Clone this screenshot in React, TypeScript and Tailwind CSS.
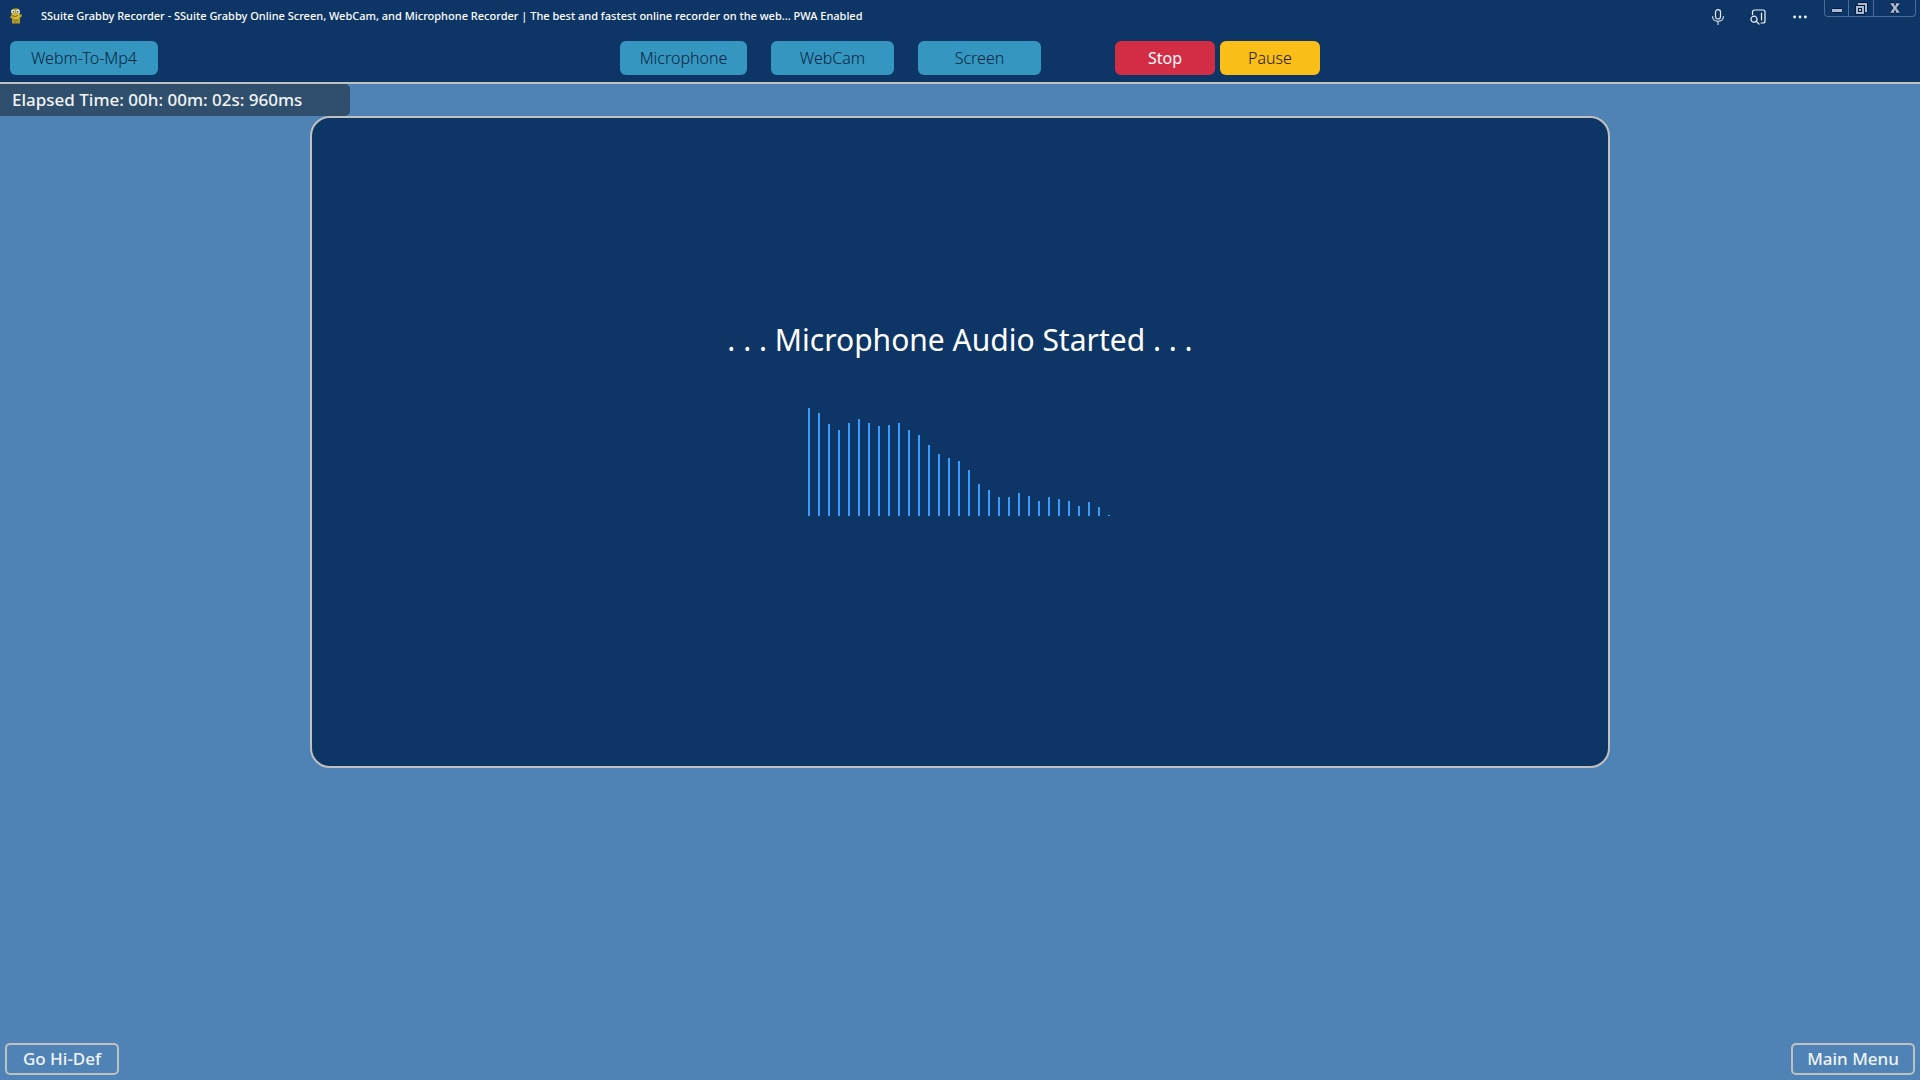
import type { ButtonHTMLAttributes } from 'react';
import clsx from 'clsx';

// Bar heights of the microphone level graph, in canvas pixels
const LEVELS = [
  108, 103, 92, 86, 93, 97, 93, 90, 91, 93, 86, 81, 71, 62, 58, 55, 46, 32, 26, 19, 19, 23, 20, 15, 19, 17, 15, 10, 14,
  9, 1,
];

function ToolButton({ className, ...props }: ButtonHTMLAttributes<HTMLButtonElement>) {
  return (
    <button
      type="button"
      className={clsx('flex h-[34px] items-center justify-center rounded-md text-base', className)}
      {...props}
    />
  );
}

function OutlineButton({ className, ...props }: ButtonHTMLAttributes<HTMLButtonElement>) {
  return (
    <button
      type="button"
      className={clsx(
        'flex h-8 items-center justify-center rounded-[5px] border-2 border-[#c0c0c0] text-[17px] font-medium text-[#f0f4f8]',
        className
      )}
      {...props}
    />
  );
}

function AppLogo() {
  return (
    <svg className="h-4 w-3" viewBox="0 0 12 16" aria-hidden="true">
      <path d="M1.500 2Q5-1 9 1l1 4v2l1.500-1 .5 2-2 2v5.500H2V11L0 9l1.500-2z" fill="#b59b27" />
      <path d="M2 6h7l1 3-3 2-4-1z" fill="#d7be3c" />
      <path d="M2 7.500q3 2 6 0" stroke="#665819" strokeWidth=".9" fill="none" />
      <path d="M3.500 12.500h4M5.500 15.500v-1.500" stroke="#8a7620" strokeWidth="1" />
      <circle cx="3" cy="3.500" r="2" fill="#e5e7e2" />
      <circle cx="8" cy="3.500" r="2" fill="#e5e7e2" />
      <circle cx="3.300" cy="3.700" r=".8" fill="#24345a" />
      <circle cx="7.700" cy="3.700" r=".8" fill="#24345a" />
    </svg>
  );
}

function MicIcon() {
  return (
    <svg className="h-4 w-3" viewBox="0 0 12 16" fill="none" stroke="#e6ecf3" strokeLinecap="round" aria-hidden="true">
      <rect x="3.5" y=".6" width="5" height="9.4" rx="2.5" strokeWidth="1.2" />
      <path d="M.7 7.5v.8a5.3 4 0 0 0 10.6 0v-.8M6 12.5v3" strokeWidth="1.1" />
    </svg>
  );
}

function TabSearchIcon() {
  return (
    <svg className="h-4 w-4" viewBox="0 0 16 16" fill="none" stroke="#f1f5f9" strokeLinecap="round" aria-hidden="true">
      <path d="M2.500 5.500V3a2 2 0 0 1 2-2H13a2 2 0 0 1 2 2v9a2 2 0 0 1-2 2h-2" strokeWidth="1.2" />
      <circle cx="4" cy="10.200" r="3" strokeWidth="1.2" />
      <path d="m6.300 12.400 2.700 2.600M11.500 4v7" strokeWidth="1.2" />
    </svg>
  );
}

function MoreIcon() {
  return (
    <svg className="h-4 w-4" viewBox="0 0 16 16" fill="#f1f5f9" aria-hidden="true">
      <circle cx="2.6" cy="8" r="1.4" />
      <circle cx="8" cy="8" r="1.4" />
      <circle cx="13.4" cy="8" r="1.4" />
    </svg>
  );
}

function MinimizeIcon() {
  return (
    <svg className="h-4 w-4" viewBox="0 0 16 16" aria-hidden="true">
      <rect x="2.500" y="8.500" width="11" height="4" rx="1" fill="#a9b9d2" stroke="#071d3c" />
    </svg>
  );
}

function RestoreIcon() {
  return (
    <svg className="h-4 w-4" viewBox="0 0 16 16" fill="none" aria-hidden="true">
      <path d="M5 4h8v7" stroke="#071d3c" strokeWidth="4" />
      <path d="M5 4h8v7h-2" stroke="#a9b9d2" strokeWidth="2" />
      <rect x="4" y="7" width="6" height="6" fill="#071d3c" stroke="#071d3c" strokeWidth="4" />
      <rect x="4" y="7" width="6" height="6" stroke="#a9b9d2" strokeWidth="2" />
      <rect x="6" y="9" width="2" height="2" fill="#a9b9d2" />
    </svg>
  );
}

function CloseIcon() {
  return (
    <svg className="h-4 w-4" viewBox="0 0 16 16" fill="none" aria-hidden="true">
      <path d="m4.500 4 7 8M11.500 4l-7 8M3 4h4M9 4h4M3 12h4M9 12h4" stroke="#071d3c" strokeWidth="3.500" />
      <path d="m5 4 6 8M11 4l-6 8" stroke="#a9b9d2" strokeWidth="2.200" />
      <path d="M3.500 4H7M9 4h3.500M3.500 12H7M9 12h3.500" stroke="#a9b9d2" strokeWidth="1.500" />
    </svg>
  );
}

function TitleBar() {
  return (
    <div className="flex h-[33px] items-start justify-between">
      <div className="flex h-8 items-center pl-[10px]">
        <AppLogo />
        <h1 className="pt-px pl-[19px] text-[11px] font-medium whitespace-nowrap text-white">
          SSuite Grabby Recorder - SSuite Grabby Online Screen, WebCam, and Microphone Recorder | The best and fastest
          online recorder on the web... PWA Enabled
        </h1>
      </div>
      <div className="flex items-start pr-1">
        <div className="flex h-[34px] items-center gap-[26px] pr-4">
          <button type="button" aria-label="Microphone in use">
            <MicIcon />
          </button>
          <button type="button" aria-label="Search tabs">
            <TabSearchIcon />
          </button>
          <button type="button" aria-label="More">
            <MoreIcon />
          </button>
        </div>
        <div className="flex h-[17px] divide-x divide-[#4b6c96] rounded-b-sm border border-t-0 border-[#4b6c96]">
          <button type="button" aria-label="Minimize" className="flex w-6 items-center justify-center">
            <MinimizeIcon />
          </button>
          <button type="button" aria-label="Restore" className="flex w-[25px] items-center justify-center">
            <RestoreIcon />
          </button>
          <button type="button" aria-label="Close" className="flex w-[41px] items-center justify-center">
            <CloseIcon />
          </button>
        </div>
      </div>
    </div>
  );
}

function Toolbar() {
  return (
    <div className="grid grid-cols-[1fr_auto_1fr] pt-2 pb-[7px]">
      <div className="pl-[10px]">
        <ToolButton className="w-[148px] bg-[#3597c0] font-light text-[#062543]">Webm-To-Mp4</ToolButton>
      </div>
      <div className="ml-5 flex">
        <div className="flex gap-6">
          <ToolButton className="w-[127px] bg-[#3597c0] font-light text-[#062543]">Microphone</ToolButton>
          <ToolButton className="w-[123px] bg-[#3597c0] font-light text-[#062543]">WebCam</ToolButton>
          <ToolButton className="w-[123px] bg-[#3597c0] font-light text-[#062543]">Screen</ToolButton>
        </div>
        <div className="ml-[74px] flex gap-[5px]">
          <ToolButton className="w-[100px] bg-[#d32d45] text-white">Stop</ToolButton>
          <ToolButton className="w-[100px] bg-[#f9be17] font-light text-[#1c1a10]">Pause</ToolButton>
        </div>
      </div>
    </div>
  );
}

function LevelGraph() {
  return (
    <svg width="304" height="108" viewBox="0 0 304 108" role="img" aria-label="Microphone level">
      {LEVELS.map((level, i) => (
        <rect key={i} x={i * 10} y={108 - level} width="2" height={level} fill="#3a9dfd" />
      ))}
    </svg>
  );
}

export default function App() {
  return (
    <div className="flex min-h-screen flex-col bg-[#4f83b5] font-['Noto_Sans',sans-serif]">
      <header className="border-b-2 border-[#c0c0c0] bg-[#0d3666]">
        <TitleBar />
        <Toolbar />
      </header>

      <main className="flex flex-col">
        <p className="h-8 w-[350px] rounded-r-[5px] bg-[#304f6d] pl-3 text-[17px] leading-[31px] font-medium text-[#f0f4f8]">
          Elapsed Time: 00h: 00m: 02s: 960ms
        </p>
        <section className="mx-auto flex aspect-[1300/652] w-full max-w-[1300px] flex-col items-center rounded-[20px] border-2 border-[#c0c0c0] bg-[#0d3666] pt-[201px]">
          <h2 className="text-3xl leading-[42px] text-white">. . . Microphone Audio Started . . .</h2>
          <div className="pt-[47px]">
            <LevelGraph />
          </div>
        </section>
      </main>

      <footer className="mt-auto flex justify-between p-[5px]">
        <OutlineButton className="w-[114px]">Go Hi-Def</OutlineButton>
        <OutlineButton className="w-[124px]">Main Menu</OutlineButton>
      </footer>
    </div>
  );
}
